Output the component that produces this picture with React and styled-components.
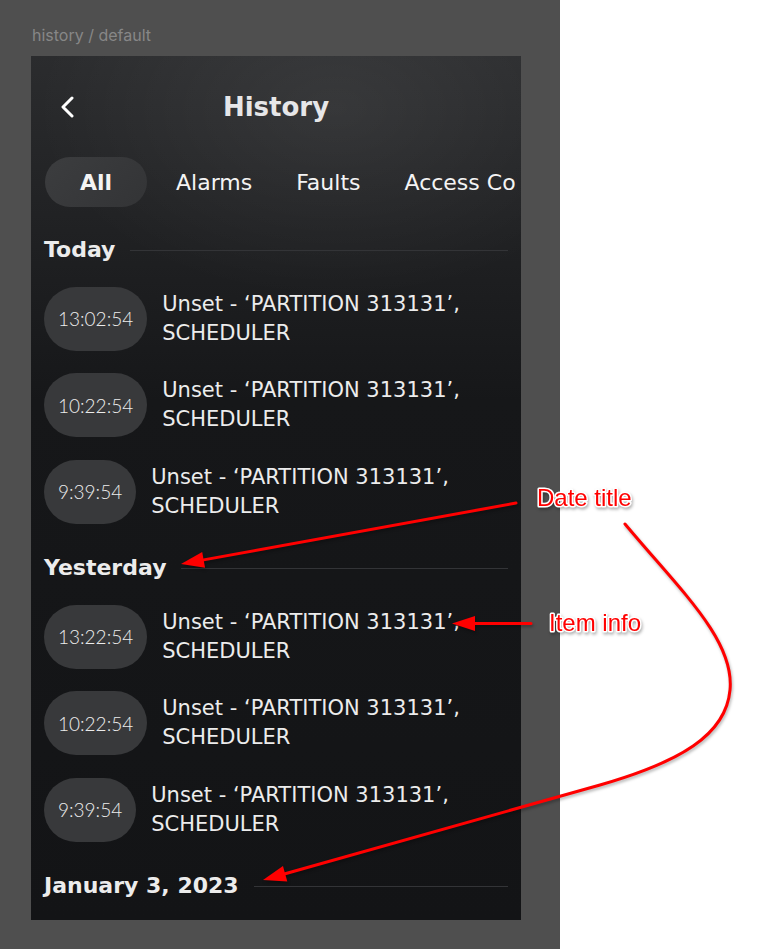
import styled, { createGlobalStyle } from "styled-components";

const GlobalStyle = createGlobalStyle`
  html, body {
    margin: 0;
    padding: 0;
  }
  body {
    background: #ffffff;
    font-family: "DejaVu Sans", sans-serif;
  }
  * {
    box-sizing: border-box;
  }
`

const Page = styled.div`
  position: relative;
  width: 777px;
  height: 949px;
  display: flex;
  background: #ffffff;
  overflow: hidden;
`

const Canvas = styled.div`
  width: 560px;
  height: 100%;
  background: #4f4f4f;
  padding: 26px 0 0 31px;
  display: flex;
  flex-direction: column;
`

const FrameLabel = styled.div`
  font-family: Inter, sans-serif;
  font-size: 16px;
  line-height: 18px;
  color: #878787;
  margin-left: 1px;
`

const Frame = styled.div`
  margin-top: 12px;
  width: 490px;
  height: 864px;
  padding: 0 13px;
  overflow: hidden;
  display: flex;
  flex-direction: column;
  background:
    radial-gradient(ellipse 300px 190px at 62% 6%, rgba(255, 255, 255, 0.07), rgba(255, 255, 255, 0) 100%),
    linear-gradient(180deg, #2b2c2e 0%, #1f2022 22%, #161719 40%, #131416 100%);
`

const Header = styled.header`
  display: grid;
  grid-template-columns: 44px 1fr 44px;
  align-items: center;
  height: 42px;
  margin-top: 30px;
`

const BackButton = styled.button`
  display: flex;
  align-items: center;
  height: 42px;
  padding: 0 0 0 17px;
  background: none;
  border: 0;
  color: #ffffff;
  cursor: pointer;
`

const Title = styled.h1`
  margin: 0;
  text-align: center;
  font-size: 26px;
  font-weight: 700;
  color: #e6e6e8;
`

const Tabs = styled.nav`
  display: flex;
  align-items: center;
  margin: 29px -9px 0 1px;
  overflow: hidden;
`

const Tab = styled.div`
  flex-shrink: 0;
  height: 50px;
  display: flex;
  align-items: center;
  justify-content: center;
  padding: 0 22px;
  font-size: 22px;
  white-space: nowrap;
  color: #f4f4f4;
  font-weight: ${(p) => (p.$active ? 700 : 400)};
  min-width: ${(p) => (p.$active ? "102px" : "0")};
  margin-right: ${(p) => (p.$active ? "7px" : "0")};
  border-radius: 25px;
  background: ${(p) => (p.$active ? "linear-gradient(135deg, #3c3d3f, #333436)" : "transparent")};
`

const List = styled.div`
  margin-top: 28px;
`

const Section = styled.section`
  & + & {
    margin-top: 29.5px;
  }
`

const SectionHead = styled.div`
  display: flex;
  align-items: center;
  gap: 15px;
  height: 30px;
`

const DateTitle = styled.h2`
  margin: 0;
  font-size: 22px;
  line-height: 30px;
  font-weight: 700;
  color: #ececec;
  white-space: nowrap;
`

const Rule = styled.div`
  flex: 1;
  height: 1px;
  background: #333437;
`

const Items = styled.ul`
  list-style: none;
  margin: 21.5px 0 0;
  padding: 0;
  display: flex;
  flex-direction: column;
  gap: 22.5px;
`

const Item = styled.li`
  display: flex;
  align-items: center;
  gap: 15px;
`

const Time = styled.span`
  flex-shrink: 0;
  height: 64px;
  padding: 0 14px;
  border-radius: 32px;
  background: #38393b;
  display: flex;
  align-items: center;
  font-family: Lato, sans-serif;
  font-weight: 300;
  font-size: 19px;
  color: #ececec;
`

const Info = styled.span`
  font-size: 21px;
  line-height: 29px;
  color: #ececec;
`

const Annotations = styled.svg`
  position: absolute;
  left: 0;
  top: 0;
  width: 777px;
  height: 949px;
  pointer-events: none;
  filter: drop-shadow(1px 2px 1.5px rgba(0, 0, 0, 0.3));
`

const tabs = ["All", "Alarms", "Faults", "Access Control"];

const entry = "Unset - \u2018PARTITION 313131\u2019, SCHEDULER";

const sections = [
  { title: "Today", items: ["13:02:54", "10:22:54", "9:39:54"] },
  { title: "Yesterday", items: ["13:22:54", "10:22:54", "9:39:54"] },
  { title: "January 3, 2023", items: [] },
];

// arrow head triangle, pointing from `from` towards `tip`
const head = (from, tip, len = 23, half = 8) => {
  const dx = tip[0] - from[0];
  const dy = tip[1] - from[1];
  const d = Math.hypot(dx, dy);
  const ux = dx / d;
  const uy = dy / d;
  const bx = tip[0] - ux * len;
  const by = tip[1] - uy * len;
  return {
    base: [bx, by],
    points: `${tip[0]},${tip[1]} ${bx - uy * half},${by + ux * half} ${bx + uy * half},${by - ux * half}`,
  };
};

const a1 = head([516, 503], [181, 564]);
const a2 = head([531, 623.5], [452, 623.5], 23, 7.5);
const a3 = head([600, 785], [263, 880]);

const Chevron = () => (
  <svg width="14" height="22" viewBox="0 0 14 22" fill="none">
    <path d="M11 2 L2 11 L11 20" stroke="currentColor" strokeWidth="3" strokeLinecap="round" strokeLinejoin="round" />
  </svg>
);

const App = () => {
  return (
    <Page>
      <GlobalStyle />
      <Canvas>
        <FrameLabel>history / default</FrameLabel>
        <Frame>
          <Header>
            <BackButton aria-label="Back">
              <Chevron />
            </BackButton>
            <Title>History</Title>
            <span />
          </Header>

          <Tabs>
            {tabs.map((t, i) => (
              <Tab key={t} $active={i === 0}>{t}</Tab>
            ))}
          </Tabs>

          <List>
            {sections.map((s) => (
              <Section key={s.title}>
                <SectionHead>
                  <DateTitle>{s.title}</DateTitle>
                  <Rule />
                </SectionHead>
                {s.items.length > 0 && (
                  <Items>
                    {s.items.map((time, i) => (
                      <Item key={i}>
                        <Time>{time}</Time>
                        <Info>{entry}</Info>
                      </Item>
                    ))}
                  </Items>
                )}
              </Section>
            ))}
          </List>
        </Frame>
      </Canvas>

      <Annotations viewBox="0 0 777 949">
        <g stroke="#ff0000" strokeWidth="3" fill="none" strokeLinecap="round">
          <line x1="516" y1="503" x2={a1.base[0]} y2={a1.base[1]} />
          <line x1="531" y1="623.5" x2={a2.base[0]} y2={a2.base[1]} />
          <path d={`M625,524 C680,590 735,640 730,690 C726,735 680,762 600,785 L${a3.base[0]},${a3.base[1]}`} />
        </g>
        <g fill="#ff0000">
          <polygon points={a1.points} />
          <polygon points={a2.points} />
          <polygon points={a3.points} />
        </g>
        <g fontFamily="'Liberation Sans', Arial, sans-serif" fontSize="24" fill="#ff0000" stroke="#ffffff" strokeWidth="3" paintOrder="stroke" strokeLinejoin="round">
          <text x="537" y="506">Date title</text>
          <text x="549" y="631">Item info</text>
        </g>
      </Annotations>
    </Page>
  );
};

export default App;
